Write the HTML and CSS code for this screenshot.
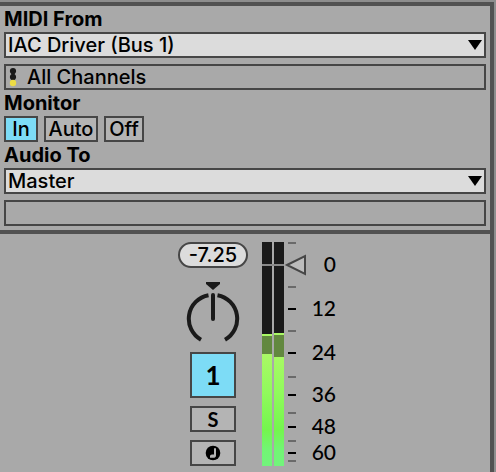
FILE: index.html
```html
<!DOCTYPE html>
<html lang="en">
<head>
<meta charset="utf-8">
<title>Track</title>
<link rel="stylesheet" href="styles.css">
</head>
<body>
<main class="track">
  <section class="routing">
    <label class="label" for="midi-from">MIDI From</label>
    <div class="picker">
      <select id="midi-from" class="field"><option>IAC Driver (Bus 1)</option></select>
      <svg class="arrow" width="14" height="10" viewBox="0 0 14 10" aria-hidden="true"><path d="M0 0H14L7 10Z"/></svg>
    </div>
    <button class="field channel" type="button">
      <svg width="8" height="20" viewBox="0 0 8 20" aria-hidden="true">
        <path class="ink" d="M2.4 3h3.2v9H2.4z"/>
        <circle class="ink" cx="4" cy="4" r="3.1"/>
        <circle class="ink" cx="4" cy="10" r="3.1"/>
        <circle class="active-dot" cx="4" cy="16" r="3.2"/>
      </svg>
      <span>All Channels</span>
    </button>
    <h2 class="label">Monitor</h2>
    <div class="monitor">
      <button class="toggle on" type="button">In</button>
      <button class="toggle auto" type="button">Auto</button>
      <button class="toggle off" type="button">Off</button>
    </div>
    <label class="label" for="audio-to">Audio To</label>
    <div class="picker">
      <select id="audio-to" class="field"><option>Master</option></select>
      <svg class="arrow" width="14" height="10" viewBox="0 0 14 10" aria-hidden="true"><path d="M0 0H14L7 10Z"/></svg>
    </div>
    <button class="field channel" type="button" aria-label="Output channel" disabled></button>
  </section>
  <section class="mixer">
    <div class="controls">
      <output class="volume">-7.25</output>
      <svg class="knob" width="54" height="68" viewBox="0 0 54 68" role="img" aria-label="Pan">
        <path class="ink" d="M20 4H34V6L27 12L20 6Z"/>
        <path class="ring" d="M15 61.700A24 24 0 0 1 22.500 17.200M31.500 17.200A24 24 0 0 1 39 61.700"/>
        <path class="needle" d="M27 17V41"/>
      </svg>
      <button class="toggle activator on" type="button">1</button>
      <button class="toggle small" type="button">S</button>
      <button class="toggle small" type="button" aria-label="Arm">
        <svg width="16" height="16" viewBox="0 0 16 16" aria-hidden="true">
          <circle cx="8" cy="8" r="7.300"/>
          <path class="note" d="M9 3.300H11V10.500Q11 12.800 8 12.800H5V11Q5 9.500 7 9.500H9Z"/>
        </svg>
      </button>
    </div>
    <svg class="meter" width="76" height="230" viewBox="0 0 76 230" role="img" aria-label="Level meter">
      <defs>
        <linearGradient id="level" gradientUnits="userSpaceOnUse" x1="0" y1="112" x2="0" y2="224">
          <stop offset="0" stop-color="#aaf965"/>
          <stop offset=".35" stop-color="#90fa5c"/>
          <stop offset=".68" stop-color="#74f54e"/>
          <stop offset=".85" stop-color="#72f574"/>
          <stop offset="1" stop-color="#72f47c"/>
        </linearGradient>
      </defs>
      <path class="ink" d="M0 0H10V224H0zM12 0H22V224H12z"/>
      <path class="zero" d="M0 23H22"/>
      <path class="peak" d="M0 92H10V94H0zM12 91H22V93H12z"/>
      <path class="hold" d="M0 94H10V112H0zM12 93H22V115H12z"/>
      <path fill="url(#level)" d="M0 112H10V224H0zM12 115H22V224H12z"/>
      <path class="minor" d="M26 1h8M26 45h8M26 89h8M26 135h8M26 171h8M26 199h8M26 219h8"/>
      <path class="major" d="M26 67h8M26 111h8M26 153h8M26 185h8M26 211h8"/>
      <path class="fader" d="M25 23L43 14V32Z"/>
      <g class="scale">
        <text x="74" y="30">0</text>
        <text x="74" y="74">12</text>
        <text x="74" y="118">24</text>
        <text x="74" y="160">36</text>
        <text x="74" y="192">48</text>
        <text x="74" y="218">60</text>
      </g>
    </svg>
  </section>
</main>
</body>
</html>
```
FILE: styles.css
```css
* { box-sizing: border-box; }

body {
  margin: 0;
  padding: 2px 2px 0 0;
  background: #8e8e8e;
  color: #000;
  font: 500 20px/26px Inter, "Liberation Sans", sans-serif;
}

.track {
  min-height: calc(100vh - 2px);
  background: #a9a9a9;
  border: solid #525252;
  border-width: 4px 4px 0 0;
}

.routing {
  display: flex;
  flex-direction: column;
  padding: 0 4px 4px;
  border-bottom: 4px solid #525252;
}

.label {
  margin: 0;
  font-size: 20px;
  font-weight: 700;
}

.picker {
  position: relative;
  margin-bottom: 6px;
}

.field {
  display: block;
  width: 100%;
  height: 26px;
  margin: 0;
  padding: 0 2px;
  border: 2px solid #464646;
  border-radius: 0;
  background: #dcdcdc;
  color: #000;
  font: inherit;
  line-height: 22px;
  appearance: none;
}

.arrow {
  position: absolute;
  top: 8px;
  right: 4px;
  pointer-events: none;
}

.channel {
  display: flex;
  align-items: center;
  gap: 10px;
  padding: 0 3px;
  background: #a9a9a9;
  text-align: left;
}

.monitor {
  display: flex;
  gap: 6px;
}

.toggle {
  display: flex;
  align-items: center;
  justify-content: center;
  height: 26px;
  min-width: 34px;
  margin: 0;
  padding: 0 2px;
  border: 2px solid #464646;
  background: #b4b4b4;
  color: #000;
  font: inherit;
  line-height: 22px;
}

.toggle.on { background: #7ddcf6; }
.auto { width: 54px; }
.off { width: 40px; }

.mixer {
  display: flex;
  gap: 14px;
  padding: 8px 0 0 178px;
}

.controls {
  display: flex;
  flex-direction: column;
  align-items: center;
  width: 70px;
}

.volume {
  width: 100%;
  height: 26px;
  border: 2px solid #464646;
  border-radius: 13px;
  background: #dcdcdc;
  line-height: 22px;
  text-align: center;
}

.knob { margin: 10px 0 6px; }

.toggle.activator {
  width: 46px;
  height: 46px;
  font-family: Lato, sans-serif;
  font-size: 26px;
  font-weight: 700;
}

.toggle.small {
  width: 46px;
  margin-top: 8px;
  font-family: Lato, sans-serif;
  font-weight: 700;
}

.ink { fill: #1a1a1a; }
.active-dot { fill: #eddc45; }
.ring { fill: none; stroke: #1a1a1a; stroke-width: 4; }
.needle { stroke: #1a1a1a; stroke-width: 4; stroke-linecap: round; }
.note { fill: #b4b4b4; }

.zero { stroke: #8a8a8a; stroke-width: 2; }
.peak { fill: #aaf965; }
.hold { fill: #62883f; }
.minor { stroke: #6a6a6a; stroke-width: 2; }
.major { stroke: #000; stroke-width: 2; }
.fader { fill: #bcbcbc; stroke: #464646; stroke-width: 2; }
.scale { font-family: Lato, sans-serif; font-size: 21px; text-anchor: end; }
```
